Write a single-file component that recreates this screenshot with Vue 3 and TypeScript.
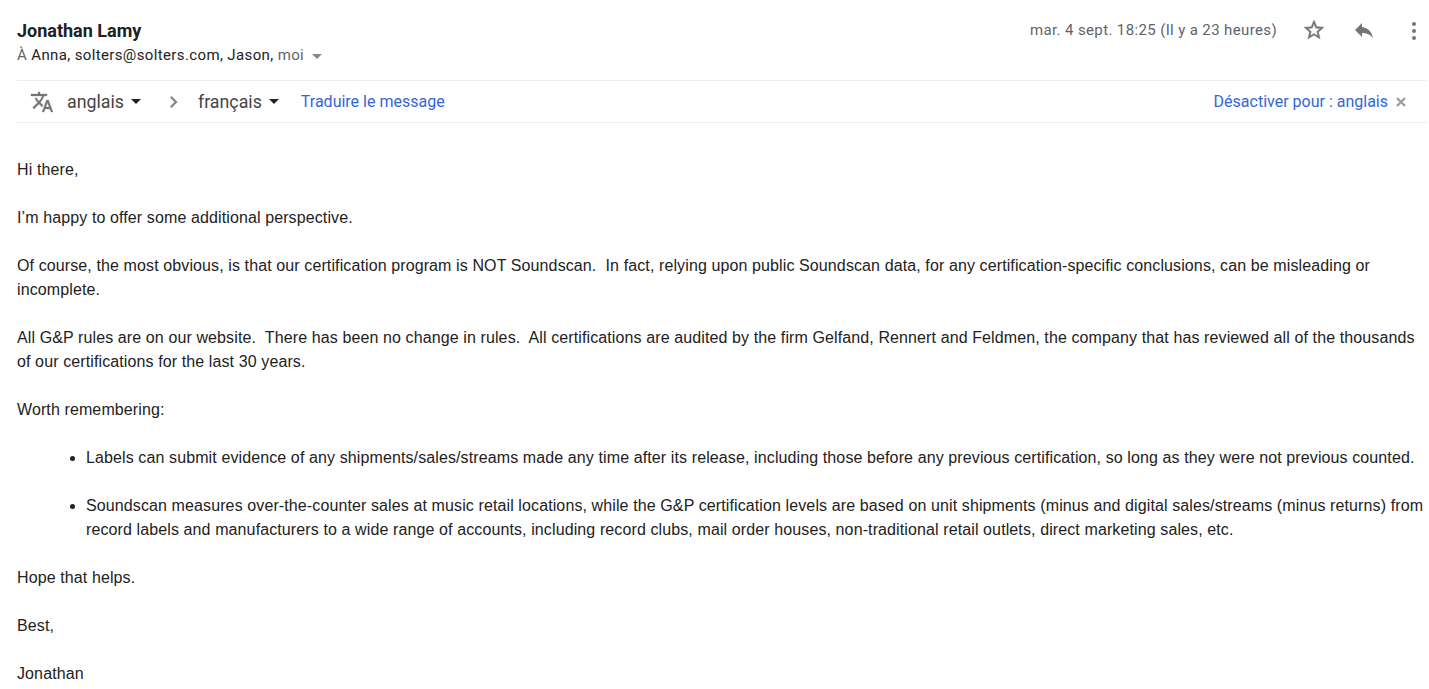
<script setup lang="ts">
const bullets: string[] = [
  'Labels can submit evidence of any shipments/sales/streams made any time after its release, including those before any previous certification, so long as they were not previous counted.',
  'Soundscan measures over-the-counter sales at music retail locations, while the G&P certification levels are based on unit shipments (minus and digital sales/streams (minus returns) from record labels and manufacturers to a wide range of accounts, including record clubs, mail order houses, non-traditional retail outlets, direct marketing sales, etc.'
]
</script>

<template>
  <div class="mail">
    <header class="head">
      <div class="who">
        <div class="name">Jonathan Lamy</div>
        <div class="to">
          <span class="grey">À</span> Anna, solters@solters.com, Jason, <span class="grey">moi</span>
          <span class="caret small"></span>
        </div>
      </div>
      <div class="meta">
        <span class="date">mar. 4 sept. 18:25 (Il y a 23 heures)</span>
        <svg class="ic star" width="24" height="24" viewBox="0 0 24 24"><path fill="#757575" stroke="#757575" stroke-width="0.4" d="M22 9.24l-7.19-.62L12 2 9.19 8.63 2 9.24l5.46 4.73L5.82 21 12 17.27 18.18 21l-1.63-7.03L22 9.24zM12 15.4l-3.76 2.27 1-4.28-3.32-2.88 4.38-.38L12 6.1l1.71 4.04 4.38.38-3.32 2.88 1 4.28L12 15.4z"/></svg>
        <svg class="ic reply" width="24" height="24" viewBox="0 0 24 24"><path fill="#757575" d="M10 9V5l-7 7 7 7v-4.1c5 0 8.5 1.6 11 5.1-1-5-4-10-11-11z"/></svg>
        <svg class="ic dots" width="4" height="18" viewBox="0 0 4 18"><circle cx="2" cy="2" r="2" fill="#757575"/><circle cx="2" cy="9" r="2" fill="#757575"/><circle cx="2" cy="16" r="2" fill="#757575"/></svg>
      </div>
    </header>

    <div class="bar">
      <svg class="tr" width="24" height="24" viewBox="0 0 24 24"><path fill="#757575" stroke="#757575" stroke-width="0.3" d="M12.87 15.07l-2.54-2.51.03-.03A17.52 17.52 0 0 0 14.07 6H17V4h-7V2H8v2H1v2h11.17C11.5 7.92 10.44 9.75 9 11.35 8.07 10.32 7.3 9.19 6.69 8h-2c.73 1.63 1.73 3.17 2.98 4.56l-5.09 5.02L4 19l5-5 3.11 3.11.76-2.04zM18.5 10h-2L12 22h2l1.12-3h4.75L21 22h2l-4.5-12zm-2.62 7l1.62-4.33L19.12 17h-3.24z"/></svg>
      <span class="lang first">anglais</span><span class="caret"></span>
      <svg class="chev" width="8" height="12" viewBox="0 0 8 12"><path fill="#888" d="M1.6 0L0 1.6 4.4 6 0 10.4 1.6 12l6-6z"/></svg>
      <span class="lang">français</span><span class="caret"></span>
      <a class="link translate">Traduire le message</a>
      <a class="link off">Désactiver pour : anglais</a>
      <svg class="x" width="10" height="10" viewBox="0 0 10 10"><path stroke="#9e9e9e" stroke-width="2.4" d="M1 1l8 8M9 1l-8 8"/></svg>
    </div>

    <div class="body">
      <p>Hi there,</p>
      <p>I’m happy to offer some additional perspective.</p>
      <p>Of course, the most obvious, is that our certification program is NOT Soundscan.&nbsp; In fact, relying upon public Soundscan data, for any certification-specific conclusions, can be misleading or incomplete.</p>
      <p>All G&amp;P rules are on our website.&nbsp; There has been no change in rules.&nbsp; All certifications are audited by the firm Gelfand, Rennert and Feldmen, the company that has reviewed all of the thousands of our certifications for the last 30 years.</p>
      <p>Worth remembering:</p>
      <ul>
        <li v-for="b in bullets" :key="b">{{ b }}</li>
      </ul>
      <p>Hope that helps.</p>
      <p>Best,</p>
      <p>Jonathan</p>
    </div>
  </div>
</template>

<style scoped>
.mail {
  box-sizing: border-box;
  width: 1429px;
  height: 689px;
  overflow: hidden;
  padding: 20px 2px 0 17px;
  font-family: Roboto, "Liberation Sans", sans-serif;
  background: #fff;
  color: #222;
}
.head {
  display: flex;
  justify-content: space-between;
  height: 60px;
  border-bottom: 1px solid #eceff1;
}
.name {
  padding-top: 1px;
  font-size: 18px;
  font-weight: 700;
  line-height: 20px;
  color: #202124;
}
.to {
  margin-top: 4px;
  font-size: 15px;
  line-height: 20px;
  color: #222;
  letter-spacing: 0.37px;
}
.grey { color: #5f6368; }
.caret {
  display: inline-block;
  width: 0;
  height: 0;
  margin-left: 7px;
  border-left: 5.5px solid transparent;
  border-right: 5.5px solid transparent;
  border-top: 5px solid #222;
  vertical-align: middle;
}
.caret.small {
  margin-left: 8px;
  border-top-color: #888;
}
.meta {
  display: flex;
  align-items: flex-start;
  color: #5f6368;
}
.date {
  font-size: 15px;
  line-height: 20px;
  letter-spacing: 0.37px;
}
.ic { flex: none; }
.star { margin: -2px 0 0 25px; }
.reply { margin: -2px 0 0 26px; }
.dots { margin: 2px 11px 0 36px; }
.bar {
  display: flex;
  align-items: center;
  height: 41px;
  border-bottom: 1px solid #eceff1;
}
.tr { margin-left: 13px; }
.lang {
  font-size: 17.8px;
  color: #444;
}
.first { margin-left: 13px; }
.chev { margin: 0 20px 0 29px; }
.link {
  font-size: 16px;
  color: #3367d6;
}
.translate { margin-left: 22px; }
.off { margin-left: auto; }
.x { margin: 0 21px 0 8px; }
.body {
  padding-top: 35px;
  font-family: "Liberation Sans", Arial, sans-serif;
  font-size: 16px;
  letter-spacing: 0.11px;
  line-height: 24px;
  color: #222;
}
p { margin: 0 0 24px; }
ul {
  margin: 0 0 24px;
  padding-left: 69px;
}
li { margin-bottom: 24px; }
li:last-child { margin-bottom: 0; }
</style>
